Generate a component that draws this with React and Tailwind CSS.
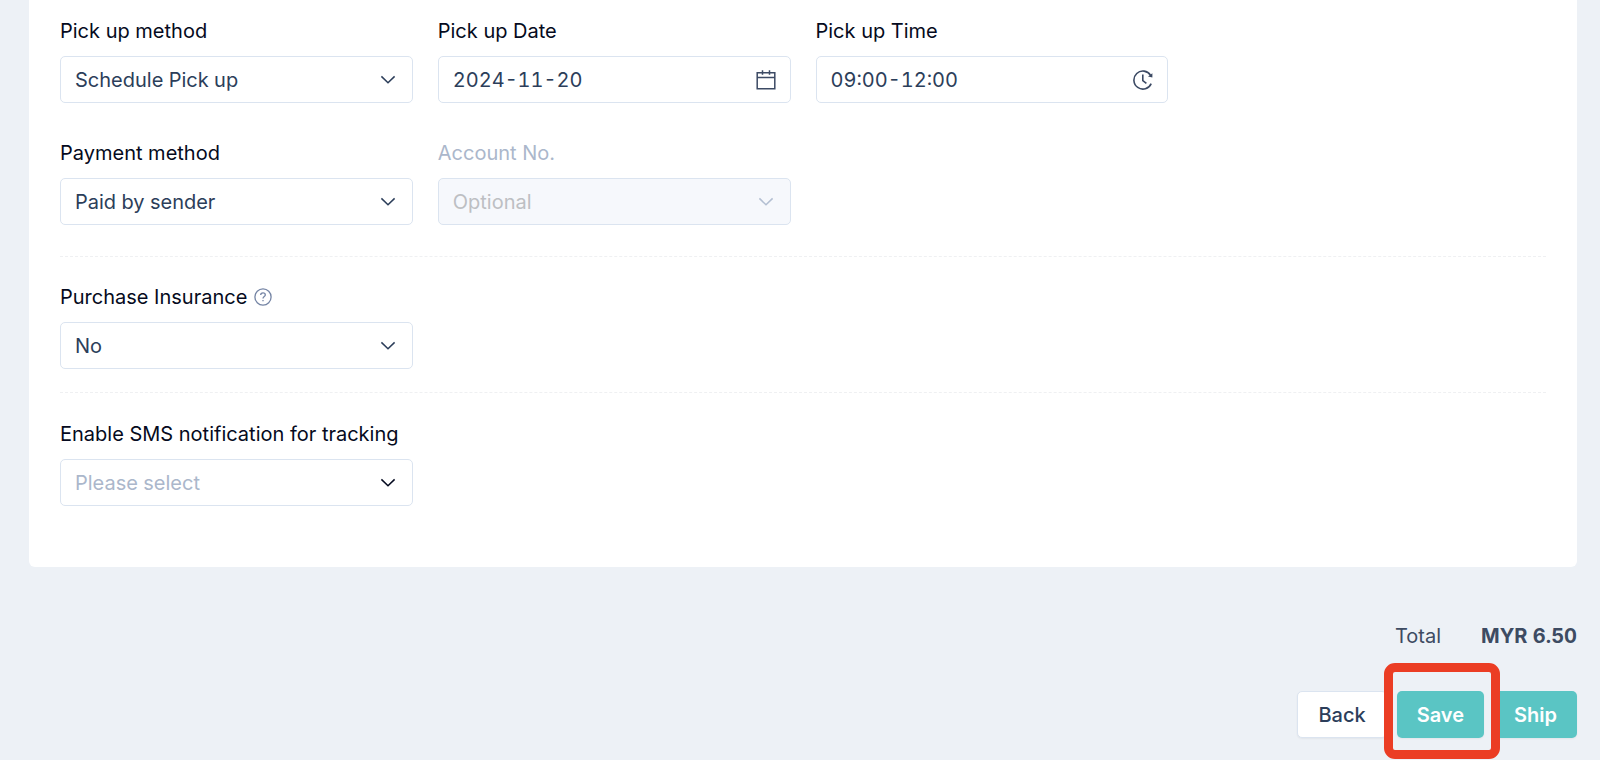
import React, { useState } from "react";

const fieldBase =
  "block w-full h-[47px] rounded-[5px] border border-[#dbe4f0] pl-3.5 pr-12 text-xl tabular-nums outline-none focus:border-teal-400";

function ChevronIcon({ className }) {
  return (
    <svg
      viewBox="0 0 16 10"
      className={`w-4 h-2.5 ${className}`}
      fill="none"
      stroke="currentColor"
      strokeWidth="1.5"
    >
      <path d="M1.4 1.4 8 7.8 14.6 1.4" />
    </svg>
  );
}

function CalendarIcon() {
  return (
    <svg
      viewBox="0 0 20 20"
      className="w-5 h-5"
      fill="none"
      stroke="currentColor"
      strokeWidth="1.5"
    >
      <path d="M1.2 2.7h17.6v16H1.2zM1.2 7.6h17.6M6.5 0.3v4.4M13.5 0.3v4.4" />
    </svg>
  );
}

function ClockIcon() {
  return (
    <svg
      viewBox="0 0 20 20"
      className="w-5 h-5"
      fill="none"
      stroke="currentColor"
      strokeWidth="1.6"
    >
      <path d="M18.2 13.6A9 9 0 1 1 17.6 5.4" />
      <path d="M9.8 4.6v6l3.6 2.8" />
      <path d="M19.4 3.2v4.2l-4.4-.9z" fill="currentColor" stroke="none" />
    </svg>
  );
}

function HelpIcon() {
  return (
    <svg
      viewBox="0 0 18 18"
      className="w-[18px] h-[18px] text-[#7585a5]"
      fill="none"
      stroke="currentColor"
      strokeWidth="1.3"
    >
      <circle cx="9" cy="9" r="8.1" />
      <path d="M6.7 7.1C6.7 5.7 7.7 4.9 9 4.9s2.3.8 2.3 2c0 1.6-2.3 1.7-2.3 3.6" />
      <path d="M9 11.9v1.4" />
    </svg>
  );
}

function Label({ htmlFor, children, disabled }) {
  return (
    <label
      htmlFor={htmlFor}
      className={`text-xl leading-6 whitespace-nowrap ${
        disabled ? "text-[#abb7cb]" : "text-[#050a20]"
      }`}
    >
      {children}
    </label>
  );
}

function SelectField({ id, label, options, placeholder, disabled, help }) {
  const [value, setValue] = useState(placeholder ? "" : options[0]);

  let color = "bg-white text-[#2c3e5a]";
  let chevron = "text-[#2c3e5a]";
  if (disabled) {
    color = "bg-[#f6f8fc] text-[#bdbfc3] opacity-100";
    chevron = "text-[#b3bfd2]";
  } else if (value === "") {
    color = "bg-white text-[#abb7cb]";
    chevron = "text-[#050a20]";
  }

  return (
    <div>
      <div className="flex items-center gap-[7px] mb-[13px]">
        <Label htmlFor={id} disabled={disabled}>
          {label}
        </Label>
        {help && (
          <button type="button" aria-label="Help">
            <HelpIcon />
          </button>
        )}
      </div>
      <div className="relative">
        <select
          id={id}
          value={value}
          disabled={disabled}
          onChange={(e) => setValue(e.target.value)}
          className={`appearance-none ${fieldBase} ${color}`}
        >
          {placeholder && <option value="">{placeholder}</option>}
          {options.map((option) => (
            <option key={option}>{option}</option>
          ))}
        </select>
        <span className="absolute inset-y-0 right-[17px] flex items-center pointer-events-none">
          <ChevronIcon className={chevron} />
        </span>
      </div>
    </div>
  );
}

function InputField({ id, label, defaultValue, icon }) {
  return (
    <div>
      <div className="flex items-center mb-[13px]">
        <Label htmlFor={id}>{label}</Label>
      </div>
      <div className="relative">
        <input
          id={id}
          type="text"
          defaultValue={defaultValue}
          className={`bg-white text-[#2c3e5a] ${fieldBase}`}
        />
        <span className="absolute inset-y-0 right-[15px] flex items-center text-[#3c4a64] pointer-events-none">
          {icon}
        </span>
      </div>
    </div>
  );
}

export default function App() {
  return (
    <div className="min-h-screen bg-[#edf1f6] pl-[29px] pr-[23px] pb-[22px] font-['Inter',sans-serif]">
      <form onSubmit={(e) => e.preventDefault()}>
        <div className="bg-white rounded-b-md px-[31px] pt-[19px] pb-[61px]">
          <div className="grid grid-cols-4 gap-x-[25px] gap-y-[38px]">
            <SelectField
              id="pickup-method"
              label="Pick up method"
              options={["Schedule Pick up"]}
            />
            <InputField
              id="pickup-date"
              label="Pick up Date"
              defaultValue="2024-11-20"
              icon={<CalendarIcon />}
            />
            <InputField
              id="pickup-time"
              label="Pick up Time"
              defaultValue="09:00-12:00"
              icon={<ClockIcon />}
            />
            <div className="col-start-1">
              <SelectField
                id="payment-method"
                label="Payment method"
                options={["Paid by sender"]}
              />
            </div>
            <SelectField
              id="account-no"
              label="Account No."
              placeholder="Optional"
              options={[]}
              disabled
            />
          </div>

          {/* Insurance */}
          <div className="grid grid-cols-4 gap-x-[25px] mt-[31px] pt-7 border-t border-dashed border-[#eff0f2]">
            <SelectField
              id="insurance"
              label="Purchase Insurance"
              options={["No", "Yes"]}
              help
            />
          </div>

          {/* Notifications */}
          <div className="grid grid-cols-4 gap-x-[25px] mt-[23px] pt-[29px] border-t border-dashed border-[#eff0f2]">
            <SelectField
              id="sms"
              label="Enable SMS notification for tracking"
              placeholder="Please select"
              options={["Yes", "No"]}
            />
          </div>
        </div>

        <div className="flex justify-end gap-10 mt-[57px] text-xl leading-6 text-[#3d4b62]">
          <span>Total</span>
          <span className="font-bold tabular-nums">MYR 6.50</span>
        </div>

        <div className="flex justify-end gap-2.5 mt-[43px] text-xl font-medium">
          <button
            type="button"
            className="h-[47px] px-5 rounded-[5px] border border-[#dbe4f0] bg-white text-[#2c3e5a] shadow-xs"
          >
            Back
          </button>
          <div className="relative">
            <button
              type="submit"
              className="h-[47px] px-5 rounded-[5px] bg-[#5ac5c4] text-white font-semibold shadow-xs"
            >
              Save
            </button>
            <div className="absolute z-10 -top-7 -bottom-[21px] -left-[13px] -right-4 rounded-[11px] border-[9px] border-[#eb3d24] pointer-events-none" />
          </div>
          <button
            type="button"
            className="h-[47px] px-5 rounded-[5px] bg-[#5ac5c4] text-white font-semibold shadow-xs"
          >
            Ship
          </button>
        </div>
      </form>
    </div>
  );
}
